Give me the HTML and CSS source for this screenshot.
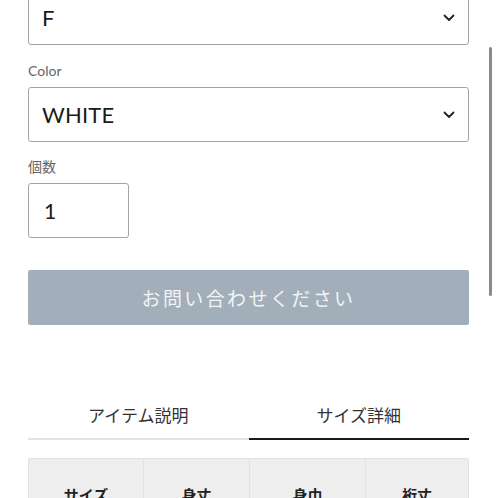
FILE: index.html
```html
<!DOCTYPE html>
<html lang="ja">
<head>
<meta charset="utf-8">
<link rel="stylesheet" href="styles.css">
</head>
<body>
<div class="page">
  <div class="select select-first">
    <span class="select-value">F</span>
    <svg class="chev" width="12" height="8" viewBox="0 0 12 8"><polyline points="1.5,1.5 6,6 10.5,1.5" fill="none" stroke="#222" stroke-width="1.8" stroke-linecap="round" stroke-linejoin="round"/></svg>
  </div>
  <div class="label label-color">Color</div>
  <div class="select">
    <span class="select-value">WHITE</span>
    <svg class="chev" width="12" height="8" viewBox="0 0 12 8"><polyline points="1.5,1.5 6,6 10.5,1.5" fill="none" stroke="#222" stroke-width="1.8" stroke-linecap="round" stroke-linejoin="round"/></svg>
  </div>
  <div class="label">個数</div>
  <div class="qty">1</div>
  <button class="inquire">お問い合わせください</button>
  <div class="tabs">
    <div class="tab">アイテム説明</div>
    <div class="tab tab-active">サイズ詳細</div>
  </div>
  <div class="size-table">
    <div class="th">サイズ</div>
    <div class="th">身丈</div>
    <div class="th">身巾</div>
    <div class="th">裄丈</div>
  </div>
</div>
<div class="scrollbar"></div>
</body>
</html>
```
FILE: styles.css
```css
html, body {
  margin: 0;
  padding: 0;
  background: #fff;
  overflow: hidden;
}
body {
  font-family: Lato, "Noto Sans CJK JP", sans-serif;
  color: #222;
}
.page {
  padding: 0 29px 0 28px;
}
.select {
  box-sizing: border-box;
  height: 55px;
  border: 1px solid #a4a4a4;
  border-radius: 3px;
  padding: 0 13px 0 13px;
  display: flex;
  align-items: center;
  justify-content: space-between;
}
.select-first {
  margin-top: -10px;
}
.select-value {
  font-family: Lato, "Noto Sans", sans-serif;
  font-size: 22px;
  color: #1a1a1a;
  letter-spacing: 0.2px;
}
.chev {
  display: block;
}
.label {
  font-family: Lato, "Noto Sans CJK JP", sans-serif;
  font-size: 14px;
  line-height: 21px;
  color: #666;
  margin: 14px 0 6px;
}
.label-color {
  margin-top: 15px;
}
.qty {
  box-sizing: border-box;
  width: 101px;
  height: 55px;
  border: 1px solid #a4a4a4;
  border-radius: 3px;
  padding-left: 15px;
  display: flex;
  align-items: center;
  font-size: 21px;
  color: #1a1a1a;
}
.inquire {
  display: block;
  width: 100%;
  height: 55px;
  margin-top: 32px;
  border: none;
  border-radius: 2px;
  background: #a2afba;
  color: #f2f4f6;
  font-family: "Noto Sans CJK JP", sans-serif;
  font-size: 19px;
  letter-spacing: 2.4px;
  padding: 0;
}
.tabs {
  display: flex;
  margin-top: 68px;
}
.tab {
  flex: 1;
  text-align: center;
  font-family: "Noto Sans CJK JP", sans-serif;
  font-size: 17px;
  line-height: 24px;
  color: #333;
  padding: 10px 0 11px;
  border-bottom: 2px solid #e2e2e2;
}
.tab-active {
  border-bottom-color: #1a1a1a;
}
.size-table {
  margin-top: 18px;
  width: 440px;
  display: grid;
  grid-template-columns: 115px 106px 116px 103px;
  background: #eeeeee;
  border-top: 1px solid #e2e2e2;
  border-left: 1px solid #e2e2e2;
  box-sizing: border-box;
}
.th {
  box-sizing: border-box;
  height: 72px;
  border-right: 1px solid #e2e2e2;
  border-bottom: 1px solid #e2e2e2;
  display: flex;
  align-items: center;
  justify-content: center;
  font-family: "Noto Sans CJK JP", sans-serif;
  font-size: 15px;
  font-weight: bold;
  color: #222;
}
.scrollbar {
  position: fixed;
  left: 489px;
  top: 47px;
  width: 3px;
  height: 249px;
  border-radius: 2px;
  background: #8a8a8a;
}
```
